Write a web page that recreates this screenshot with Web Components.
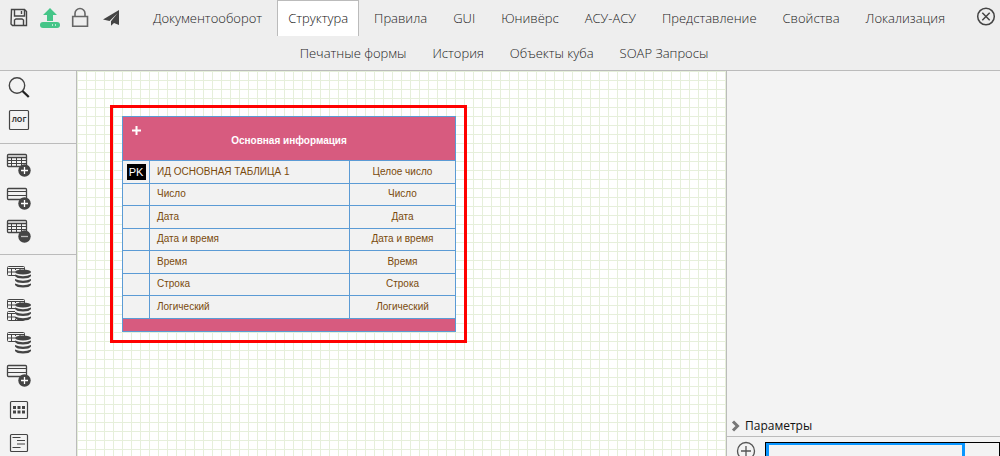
<!DOCTYPE html>
<html lang="ru">
<head>
<meta charset="utf-8">
<title>Структура</title>
<style>
html,body{margin:0;height:100%}
body{font:13px/18px "Open Sans","Noto Sans",sans-serif;color:#555}
</style>
</head>
<body>
<app-shell></app-shell>

<template id="t-shell">
<style>
:host{display:flex;flex-direction:column;height:100vh;overflow:hidden;background:#f3f3f3}
.body{flex:1;display:flex;min-height:0}
schema-canvas{flex:1;min-width:0}
</style>
<top-bar></top-bar>
<div class="body">
<tool-rail></tool-rail>
<schema-canvas>
<entity-table></entity-table>
</schema-canvas>
<side-panel></side-panel>
</div>
</template>

<template id="t-top">
<style>
:host{display:block;background:#eee;border-bottom:1px solid #bbb}
header{display:flow-root;padding-left:8px}
.tools{float:left;display:flex;width:120px;height:34px}
.close{float:right;width:30px;height:34px}
button{border:0;padding:0;margin:0;background:none;width:30px;height:34px;flex:none}
svg{display:block}
nav{text-align:center;font-size:13px;font-weight:300;line-height:34px}
ul{display:contents}
li{display:inline-block;height:35px;margin:0 2px;vertical-align:top}
a{display:block;box-sizing:border-box;height:36px;padding:0 10px;border:1px solid transparent;border-bottom:0;color:#1c1c1c;text-decoration:none}
a[aria-current]{background:#fff;border-color:#bbb;color:#111}
</style>
<header>
<div class="tools">
<button aria-label="Сохранить"><svg width="30" height="34" fill="none" stroke="#444" stroke-width="1.4"><path d="M3.500 9.500h13l2 2v14h-14l-1.500-1.500zM6.500 10v6h10v-6M13.500 11v3M6.500 25v-5l1.500-1h6l1.500 1v5"/></svg></button>
<button aria-label="Отправить"><svg width="30" height="34" fill="#45c588"><path d="M12 8l7 7h-4v6h-6v-6h-4z"/><rect x="2" y="22" width="20" height="6" rx="3"/><path d="M14 24h1v2h-1zM17 24h1v2h-1z" fill="#b5ead0"/></svg></button>
<button aria-label="Заблокировать"><svg width="30" height="34" fill="none" stroke="#666" stroke-width="1.600"><path d="M4.700 16.500h14.800v9.800h-14.800zM7 16.500v-3a5 5 0 0 1 10 0v3"/></svg></button>
<button aria-label="Опубликовать"><svg width="30" height="34" fill="#444"><path d="M21 10v15l-5-2-3 2.800v-4.500l6.500-8-8 7.700-6.500-1.500z"/></svg></button>
</div>
<button class="close" aria-label="Закрыть"><svg width="30" height="34" fill="none" stroke="#444" stroke-width="1.500"><circle cx="16" cy="16.500" r="8.300"/><path d="M12.300 12.800l7.400 7.400M19.700 12.800l-7.400 7.400"/></svg></button>
<nav><ul><li><a href="#">Документооборот</a></li><li><a href="#" aria-current="page">Структура</a></li><li><a href="#">Правила</a></li><li><a href="#">GUI</a></li><li><a href="#">Юнивёрс</a></li><li><a href="#">АСУ-АСУ</a></li><li><a href="#">Представление</a></li><li><a href="#">Свойства</a></li><li><a href="#">Локализация</a></li><wbr><li><a href="#">Печатные формы</a></li><li><a href="#">История</a></li><li><a href="#">Объекты куба</a></li><li><a href="#">SOAP Запросы</a></li></ul></nav>
</header>
</template>

<template id="t-rail">
<style>
:host{display:block;flex:none;width:76px;border-right:1px solid #bbb;background:#f3f3f3;overflow:hidden}
.group{padding:5px 0 6px;border-bottom:1px solid #bbb}
.group:first-of-type{padding-top:0}
</style>
<div class="group"><tool-button icon="search" label="Поиск"></tool-button><tool-button icon="log" label="Лог"></tool-button></div>
<div class="group"><tool-button icon="tableAdd" label="Добавить таблицу"></tool-button><tool-button icon="rowAdd" label="Добавить строку"></tool-button><tool-button icon="tableDel" label="Удалить таблицу"></tool-button></div>
<div class="group"><tool-button icon="db" label="База данных"></tool-button><tool-button icon="dbAll" label="Все таблицы"></tool-button><tool-button icon="db" label="Обновить базу"></tool-button><tool-button icon="rowAdd" label="Добавить поле"></tool-button><tool-button icon="dots" label="Поля"></tool-button><tool-button icon="list" label="Список"></tool-button></div>
</template>

<template id="t-canvas">
<style>
:host{display:block;position:relative;overflow:hidden;background-color:#fff;background-image:linear-gradient(to right,#e6efdb 1px,transparent 1px),linear-gradient(to bottom,#e6efdb 1px,transparent 1px);background-size:9px 9px}
.selection{position:absolute;left:33px;top:34px;border:3px solid #f00;padding:8px 8px 8px 9px}
</style>
<div class="selection"><slot></slot></div>
</template>

<template id="t-entity">
<style>
:host{display:block;font:10px/12px "Liberation Sans",Arial,sans-serif;color:#7a4a0c}
table{border-collapse:collapse;table-layout:fixed;width:334px;background:#f2f2f2}
th,td{border:1px solid #5b9bd5;padding:0;font-weight:normal}
.k{width:27px}.n{width:200px}
thead th{background:#d75b7f;color:#fff;height:43px;font-weight:bold}
.head{display:grid;grid-template-columns:26px 1fr 26px;align-items:center;height:43px}
.head button{align-self:start;border:0;background:none;padding:0;height:26px}
.head svg{display:block}
.head span{padding-top:4px}
tbody tr{height:22px}
tbody tr:nth-child(odd){height:23px}
tbody td{padding-bottom:1px}
tbody td:nth-child(2){padding-left:7px}
tbody td:nth-child(3){text-align:center}
tbody td:first-child{text-align:center}
b{display:block;width:19px;margin:auto;background:#000;color:#fff;font-weight:normal;font-size:11px;line-height:16px}
tfoot td{height:12px;background:#d75b7f}
</style>
<table>
<colgroup><col class="k"><col class="n"><col></colgroup>
<thead><tr><th colspan="3"><div class="head"><button aria-label="Добавить поле"><svg width="26" height="26"><path d="M9 13.500h9M13.500 9v9" stroke="#fff" stroke-width="2"/></svg></button><span>Основная информация</span></div></th></tr></thead>
<tbody>
<tr><td><b>PK</b></td><td>ИД ОСНОВНАЯ ТАБЛИЦА 1</td><td>Целое число</td></tr>
<tr><td></td><td>Число</td><td>Число</td></tr>
<tr><td></td><td>Дата</td><td>Дата</td></tr>
<tr><td></td><td>Дата и время</td><td>Дата и время</td></tr>
<tr><td></td><td>Время</td><td>Время</td></tr>
<tr><td></td><td>Строка</td><td>Строка</td></tr>
<tr><td></td><td>Логический</td><td>Логический</td></tr>
</tbody>
<tfoot><tr><td colspan="3"></td></tr></tfoot>
</table>
</template>

<template id="t-side">
<style>
:host{display:flex;flex-direction:column;flex:none;width:273px;border-left:1px solid #bbb;background:#f3f3f3}
.space{flex:1}
.title{display:flex;align-items:center;gap:4px;width:100%;height:21px;padding:0 0 0 4px;border:0;border-bottom:1px solid #bbb;background:none;font:12px/18px "Open Sans",sans-serif;color:#111;box-sizing:border-box}
.row{display:flex;height:19px;overflow:hidden}
.row button{border:0;background:none;padding:0;width:38px;height:26px;flex:none}
svg{display:block}
.grid{flex:1;display:flex;margin-top:5px;height:26px;border:1px solid #000;box-sizing:border-box}
.grid input{box-sizing:border-box;width:199px;height:25px;border:3px solid #0a96ff;border-top-width:2px;background:#f3f3f3;padding:0;outline:0;border-radius:0}
</style>
<div class="space"></div>
<button class="title" aria-expanded="true"><svg width="10" height="12" fill="none" stroke="#777" stroke-width="3"><path d="M2 1.500l4.500 4.500-4.500 4.500"/></svg>Параметры</button>
<div class="row"><button aria-label="Добавить параметр"><svg width="38" height="26" fill="none" stroke="#555" stroke-width="1.300"><circle cx="19" cy="14" r="8.500"/><path d="M14 14h10M19 9v10"/></svg></button><div class="grid"><input aria-label="Имя параметра"></div></div>
</template>

<script>
const table='<g fill="none" stroke="#444"><rect x="7.500" y="5.500" width="19" height="12" rx="1" stroke-width="1.300"/><path d="M7 8.500h20" stroke-width="1.500"/><path d="M7 11.500h20M7 14.500h20M11.500 9v9M16.500 9v9M21.500 9v9"/></g>';
const rows='<g fill="none" stroke="#444"><rect x="7.500" y="6.500" width="19" height="11" rx="1" stroke-width="1.300"/><path d="M7 9.500h20M7 13.500h20"/></g>';
const badge='<circle cx="24.500" cy="21.500" r="6.200" fill="#444"/>';
const plus='<path d="M21 21.500h7M24.500 18v7" stroke="#fff" stroke-width="1.300"/>';
const small=y=>`<g transform="translate(0 ${y})" fill="none" stroke="#444"><rect x="7.500" y="0.500" width="17" height="9" rx="1"/><path d="M7 2.500h18M7 6h18M11.500 3v7M15.500 3v7M20 3v7"/></g>`;
const disks='<path d="M15 10h16v16h-16z" fill="#f3f3f3"/><g transform="translate(0 1)" fill="#444"><ellipse cx="23" cy="11" rx="8" ry="2.500"/><path d="M15 13.500q8 3.400 16 0v1.500q-1.500 2.500-8 2.500t-8-2.500zM15 18q8 3.400 16 0v1.500q-1.500 2.500-8 2.500t-8-2.500zM15 22.500q8 3.400 16 0v1.500q-1.500 2.500-8 2.500t-8-2.500z"/></g>';
const icons={
search:'<g fill="none" stroke="#444"><circle cx="17" cy="14.500" r="7.700" stroke-width="1.400"/><path d="M22.500 20l6.300 6" stroke="#222" stroke-width="2.300"/></g>',
log:'<rect x="9.500" y="6.500" width="19" height="19" rx="1" fill="none" stroke="#444" stroke-width="1.200"/><text x="19" y="18" text-anchor="middle" font-family="Open Sans" font-weight="bold" font-size="7" fill="#333">ЛОГ</text>',
tableAdd:table+badge+plus,
rowAdd:rows+badge+plus,
tableDel:table+badge+'<path d="M21 21.500h7" stroke="#bbb" stroke-width="1.300"/>',
db:small(6)+disks,
dbAll:small(6)+small(18)+disks,
dots:'<rect x="10.500" y="9.500" width="17" height="17" rx="1" fill="none" stroke="#444" stroke-width="1.200"/><path d="M13 14h3v3h-3zM17.500 14h3v3h-3zM22 14h3v3h-3zM13 18.500h3v3h-3zM17.500 18.500h3v3h-3zM22 18.500h3v3h-3z" fill="#444"/>',
list:'<g fill="none" stroke="#444" stroke-width="1.200"><rect x="10.500" y="9.500" width="17" height="17" rx="1"/><path d="M12.500 12.500h8M17 15.500h8M17 19h8M12.500 22.500h8"/></g>'
};
const define=(name,id)=>customElements.define(name,class extends HTMLElement{
constructor(){super();this.attachShadow({mode:'open'}).append(document.getElementById(id).content.cloneNode(true));}
});
customElements.define('tool-button',class extends HTMLElement{
connectedCallback(){
if(this.shadowRoot)return;
this.attachShadow({mode:'open'}).innerHTML=`<style>:host{display:block;height:33px}button{display:block;border:0;padding:0;background:none}svg{display:block}</style><button aria-label="${this.getAttribute('label')}"><svg width="40" height="33">${icons[this.getAttribute('icon')]}</svg></button>`;
}
});
define('entity-table','t-entity');
define('schema-canvas','t-canvas');
define('tool-rail','t-rail');
define('side-panel','t-side');
define('top-bar','t-top');
define('app-shell','t-shell');
</script>
</body>
</html>
